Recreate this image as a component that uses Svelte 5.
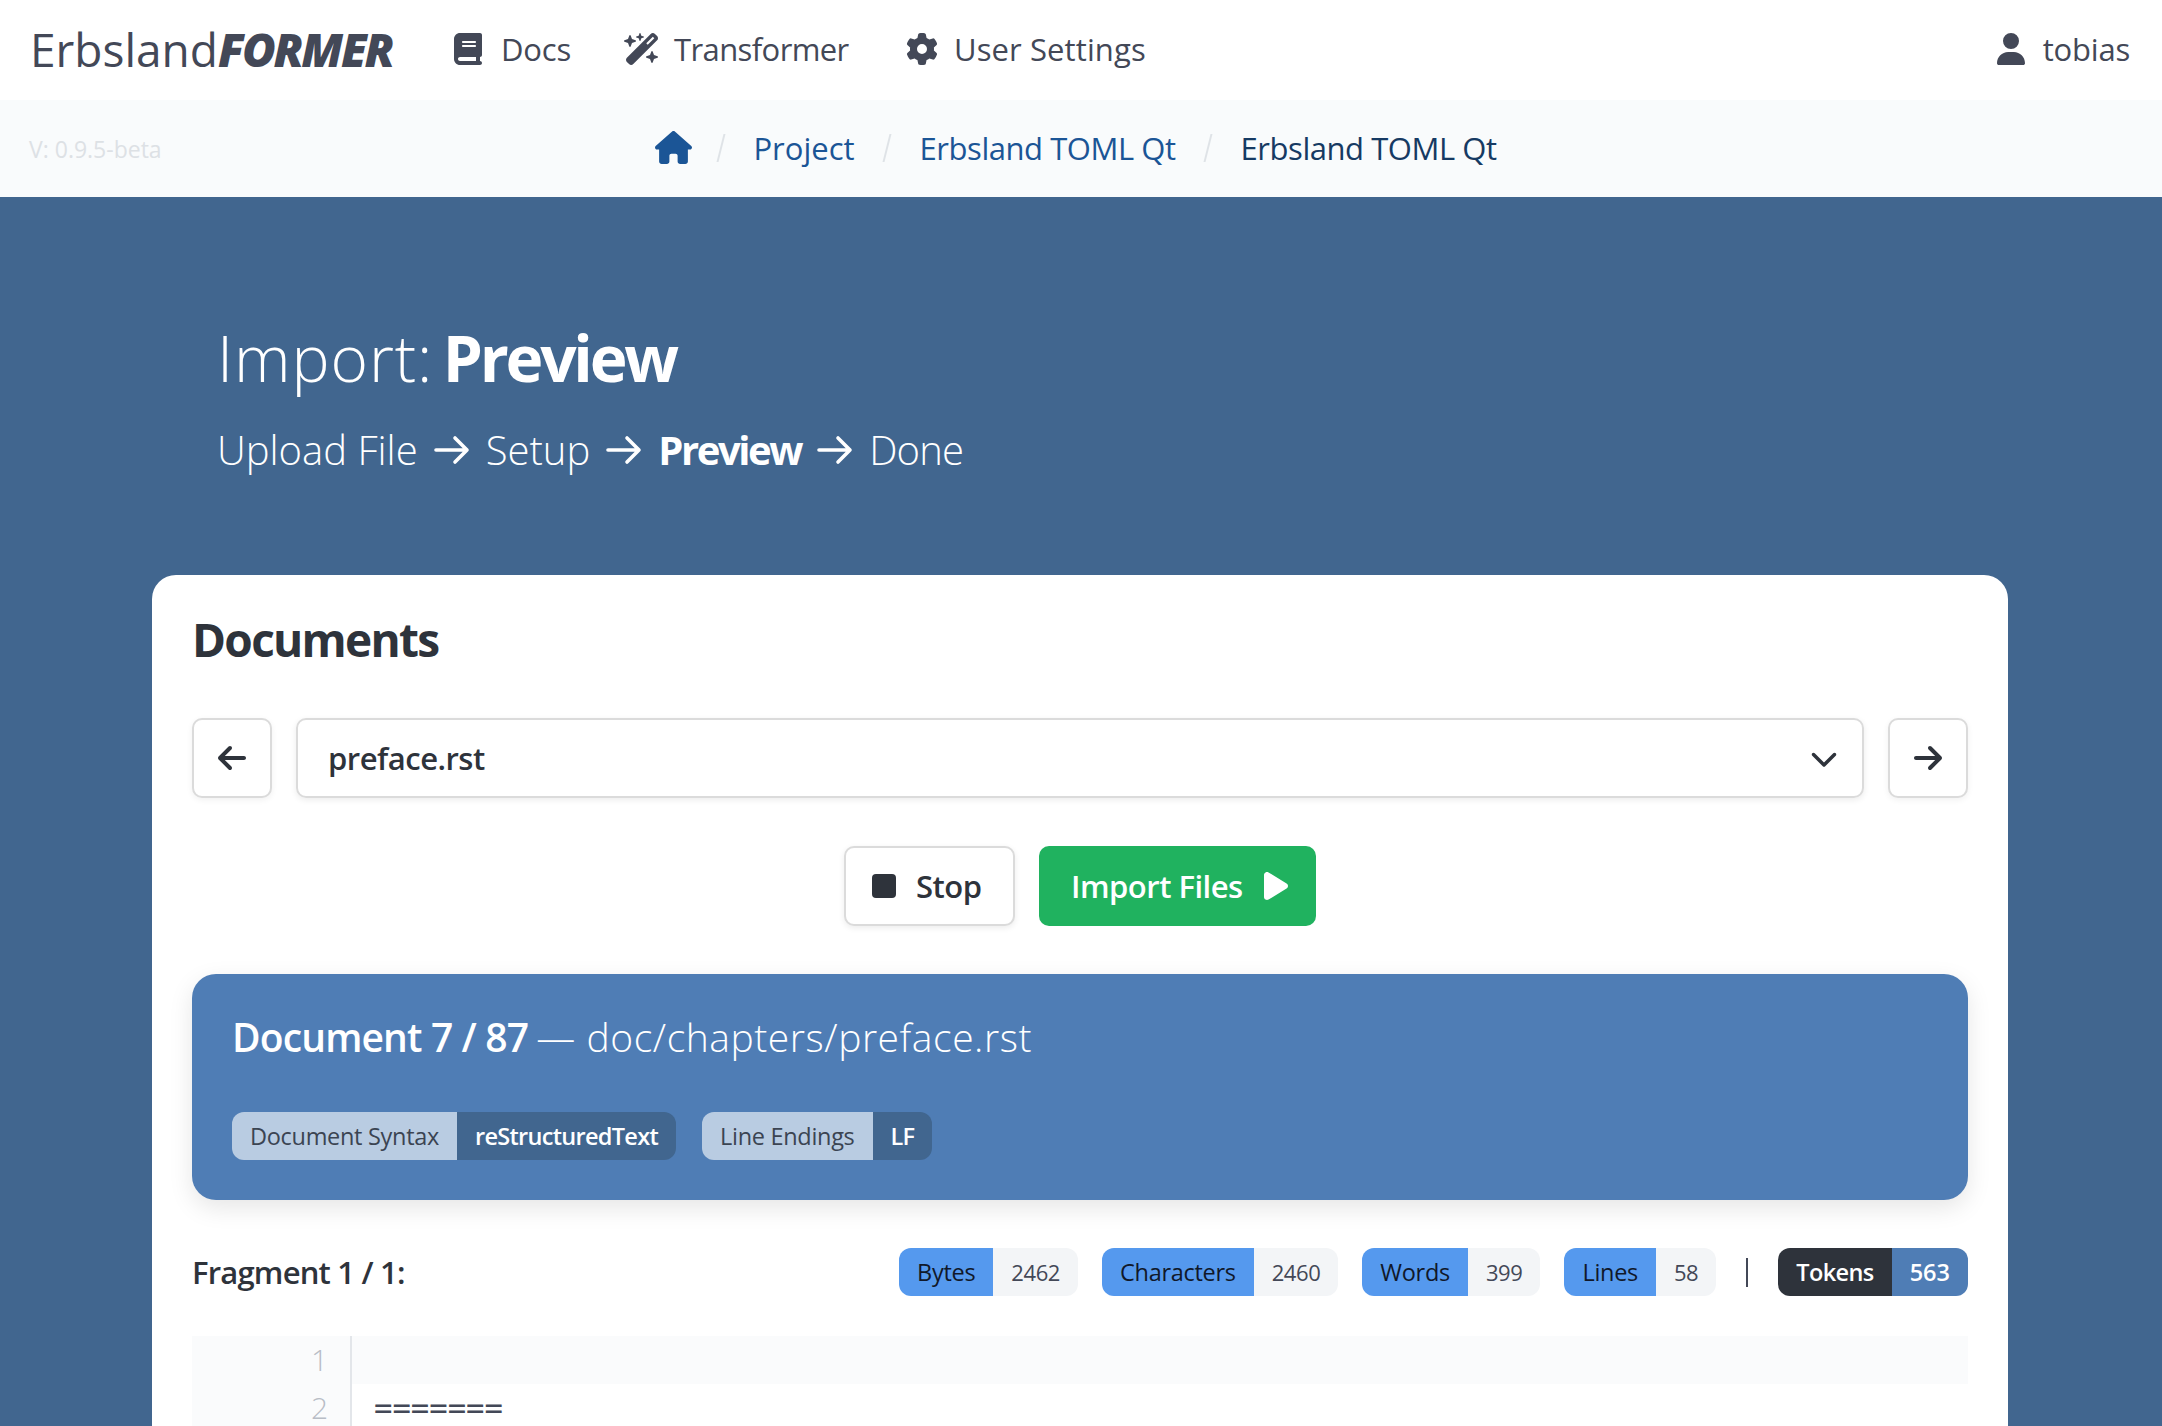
<script>
  const I = {
    book: ['0 0 448 512', 'M96 0C43 0 0 43 0 96V416c0 53 43 96 96 96H384h32c17.7 0 32-14.3 32-32s-14.3-32-32-32V384c17.7 0 32-14.3 32-32V32c0-17.7-14.3-32-32-32H384 96zm0 384H352v64H96c-17.7 0-32-14.3-32-32s14.3-32 32-32zm32-240c0-8.8 7.2-16 16-16H336c8.8 0 16 7.2 16 16s-7.2 16-16 16H144c-8.8 0-16-7.2-16-16zm16 48H336c8.8 0 16 7.2 16 16s-7.2 16-16 16H144c-8.8 0-16-7.2-16-16s7.2-16 16-16z'],
    wand: ['0 0 576 512', 'M234.7 42.7L197 56.8c-3 1.1-5 4-5 7.2s2 6.1 5 7.2l37.7 14.1L248.8 123c1.1 3 4 5 7.2 5s6.1-2 7.2-5l14.1-37.7L315 71.2c3-1.1 5-4 5-7.2s-2-6.1-5-7.2L277.3 42.7 263.2 5c-1.1-3-4-5-7.2-5s-6.1 2-7.2 5L234.7 42.7zM46.1 395.4c-18.7 18.7-18.7 49.1 0 67.9l34.6 34.6c18.7 18.7 49.1 18.7 67.9 0L529.9 116.5c18.7-18.7 18.7-49.1 0-67.9L495.3 14.1c-18.7-18.7-49.1-18.7-67.9 0L46.1 395.4zM484.6 82.6l-105 105-23.3-23.3 105-105 23.3 23.3zM7.5 117.2C3 118.9 0 123.2 0 128s3 9.1 7.5 10.8L64 160l21.2 56.5c1.7 4.5 6 7.5 10.8 7.5s9.1-3 10.8-7.5L128 160l56.5-21.2c4.5-1.7 7.5-6 7.5-10.8s-3-9.1-7.5-10.8L128 96 106.8 39.5C105.1 35 100.8 32 96 32s-9.1 3-10.8 7.5L64 96 7.5 117.2zm352 256c-4.5 1.7-7.5 6-7.5 10.8s3 9.1 7.5 10.8L416 416l21.2 56.5c1.7 4.5 6 7.5 10.8 7.5s9.1-3 10.8-7.5L480 416l56.5-21.2c4.5-1.7 7.5-6 7.5-10.8s-3-9.1-7.5-10.8L480 352l-21.2-56.5c-1.7-4.5-6-7.5-10.8-7.5s-9.1 3-10.8 7.5L416 352l-56.5 21.2z'],
    gear: ['0 0 512 512', 'M495.9 166.6c3.2 8.7 .5 18.4-6.4 24.6l-43.3 39.4c1.1 8.3 1.7 16.8 1.7 25.4s-.6 17.1-1.7 25.4l43.3 39.4c6.9 6.2 9.6 15.9 6.4 24.6c-4.4 11.9-9.7 23.3-15.8 34.3l-4.7 8.1c-6.6 11-14 21.4-22.1 31.2c-5.9 7.2-15.7 9.6-24.5 6.8l-55.7-17.7c-13.4 10.3-28.2 18.9-44 25.4l-12.5 57.1c-2 9.1-9 16.3-18.2 17.8c-13.8 2.3-28 3.5-42.5 3.5s-28.7-1.2-42.5-3.5c-9.2-1.5-16.2-8.7-18.2-17.8l-12.5-57.1c-15.8-6.5-30.6-15.1-44-25.4L83.1 425.9c-8.8 2.8-18.6 .3-24.5-6.8c-8.1-9.8-15.5-20.2-22.1-31.2l-4.7-8.1c-6.1-11-11.4-22.4-15.8-34.3c-3.2-8.7-.5-18.4 6.4-24.6l43.3-39.4C64.6 273.1 64 264.6 64 256s.6-17.1 1.7-25.4L22.4 191.2c-6.9-6.2-9.6-15.9-6.4-24.6c4.4-11.9 9.7-23.3 15.8-34.3l4.7-8.1c6.6-11 14-21.4 22.1-31.2c5.9-7.2 15.7-9.6 24.5-6.8l55.7 17.7c13.4-10.3 28.2-18.9 44-25.4l12.5-57.1c2-9.1 9-16.3 18.2-17.8C227.3 1.2 241.5 0 256 0s28.7 1.2 42.5 3.5c9.2 1.5 16.2 8.7 18.2 17.8l12.5 57.1c15.8 6.5 30.6 15.1 44 25.4l55.7-17.7c8.8-2.8 18.6-.3 24.5 6.8c8.1 9.8 15.5 20.2 22.1 31.2l4.7 8.1c6.1 11 11.4 22.4 15.8 34.3zM256 336a80 80 0 1 0 0-160 80 80 0 1 0 0 160z'],
    user: ['0 0 448 512', 'M224 256A128 128 0 1 0 224 0a128 128 0 1 0 0 256zm-45.7 48C79.8 304 0 383.8 0 482.3C0 498.7 13.3 512 29.7 512H418.3c16.4 0 29.7-13.3 29.7-29.7C448 383.8 368.2 304 269.7 304H178.3z'],
    house: ['0 0 576 512', 'M575.8 255.5c0 18-15 32.1-32 32.1h-32l.7 160.2c0 2.7-.2 5.4-.5 8.1V472c0 22.1-17.9 40-40 40H456c-1.1 0-2.2 0-3.3-.1c-1.4 .1-2.8 .1-4.2 .1H416 392c-22.1 0-40-17.9-40-40V448 384c0-17.7-14.3-32-32-32H256c-17.7 0-32 14.3-32 32v64 24c0 22.1-17.9 40-40 40H160 128.1c-1.5 0-3-.1-4.5-.2c-1.2 .1-2.4 .2-3.6 .2H104c-22.1 0-40-17.9-40-40V360c0-.9 0-1.9 .1-2.8V287.6H32c-18 0-32-14-32-32.1c0-9 3-17 10-24L266.4 8c7-7 15-8 22-8s15 2 21 7L564.8 231.5c8 7 12 15 11 24z'],
    right: ['0 0 448 512', 'M438.6 278.6c12.5-12.5 12.5-32.8 0-45.3l-160-160c-12.5-12.5-32.8-12.5-45.3 0s-12.5 32.8 0 45.3L338.8 224 32 224c-17.7 0-32 14.3-32 32s14.3 32 32 32l306.7 0L233.4 393.4c-12.5 12.5-12.5 32.8 0 45.3s32.8 12.5 45.3 0l160-160z'],
    left: ['0 0 448 512', 'M9.4 233.4c-12.5 12.5-12.5 32.8 0 45.3l160 160c12.5 12.5 32.8 12.5 45.3 0s12.5-32.8 0-45.3L109.2 288 416 288c17.7 0 32-14.3 32-32s-14.3-32-32-32l-306.7 0L214.6 118.6c12.5-12.5 12.5-32.8 0-45.3s-32.8-12.5-45.3 0l-160 160z'],
    chev: ['0 0 512 512', 'M233.4 406.6c12.5 12.5 32.8 12.5 45.3 0l192-192c12.5-12.5 12.5-32.8 0-45.3s-32.8-12.5-45.3 0L256 338.7 86.6 169.4c-12.5-12.5-32.8-12.5-45.3 0s-12.5 32.8 0 45.3l192 192z'],
    play: ['0 0 384 512', 'M73 39c-14.8-9.1-33.4-9.4-48.5-.9S0 62.6 0 80V432c0 17.4 9.4 33.4 24.5 41.9s33.7 8.1 48.5-.9L361 297c14.3-8.7 23-24.2 23-41s-8.7-32.2-23-41L73 39z']
  };
  const stats = [['Bytes', '2462'], ['Characters', '2460'], ['Words', '399'], ['Lines', '58']];
</script>

{#snippet icon(name, cls)}
  <svg class={cls} viewBox={I[name][0]} aria-hidden="true"><path d={I[name][1]} fill="currentColor" /></svg>
{/snippet}

{#snippet flow()}
  <svg class="flow-arrow" viewBox="0 0 36 32" aria-hidden="true"><path d="M2 16H33M21 4L33 16L21 28" fill="none" stroke="currentColor" stroke-width="3.6" stroke-linecap="round" stroke-linejoin="round" /></svg>
{/snippet}

<div class="page">
  <nav class="nav">
    <div class="logo">Erbsland<b>FORMER</b></div>
    <a class="item docs">{@render icon('book', 'i-book')}<span>Docs</span></a>
    <a class="item trans">{@render icon('wand', 'i-wand')}<span>Transformer</span></a>
    <a class="item settings">{@render icon('gear', 'i-gear')}<span>User Settings</span></a>
    <a class="item user">{@render icon('user', 'i-user')}<span>tobias</span></a>
  </nav>

  <div class="crumbs">
    <span class="version">V: 0.9.5-beta</span>
    <div class="trail">
      <a class="link home">{@render icon('house', 'i-house')}</a>
      <i class="sep"></i>
      <a class="link">Project</a>
      <i class="sep"></i>
      <a class="link tight">Erbsland TOML Qt</a>
      <i class="sep"></i>
      <span class="current tight">Erbsland TOML Qt</span>
    </div>
  </div>

  <main class="hero">
    <header class="head">
      <h1>Import: <b>Preview</b></h1>
      <p class="steps">
        <span>Upload File</span>{@render flow()}<span>Setup</span>{@render flow()}<b>Preview</b>{@render flow()}<span class="done">Done</span>
      </p>
    </header>

    <section class="card">
      <h2>Documents</h2>

      <div class="pick">
        <button class="square">{@render icon('left', 'i-arrow')}</button>
        <div class="select"><span>preface.rst</span>{@render icon('chev', 'i-chev')}</div>
        <button class="square">{@render icon('right', 'i-arrow')}</button>
      </div>

      <div class="actions">
        <button class="btn stop"><i class="stop-box"></i><span>Stop</span></button>
        <button class="btn go"><span>Import Files</span>{@render icon('play', 'i-play')}</button>
      </div>

      <div class="doc">
        <h3><b>Document 7 / 87</b> <span>— doc/chapters/preface.rst</span></h3>
        <div class="doc-tags">
          <span class="pair big"><span class="k">Document Syntax</span><span class="v">reStructuredText</span></span>
          <span class="pair big"><span class="k">Line Endings</span><span class="v">LF</span></span>
        </div>
      </div>

      <div class="frag">
        <strong>Fragment 1 / 1:</strong>
        <div class="stats">
          {#each stats as s}
            <span class="pair stat"><span class="k">{s[0]}</span><span class="v">{s[1]}</span></span>
          {/each}
          <i class="bar"></i>
          <span class="pair tok"><span class="k">Tokens</span><span class="v">563</span></span>
        </div>
      </div>

      <div class="code">
        <div class="row active"><span class="no">1</span><span class="src"></span></div>
        <div class="row"><span class="no">2</span><span class="src">=======</span></div>
      </div>
    </section>
  </main>
</div>

<style>
  :global(html), :global(body) { margin: 0; height: 100%; overflow: hidden; background: #41668f; }
  .page { height: 1426px; overflow: hidden; font-family: "Open Sans", "Noto Sans", sans-serif; color: #2e333b; }
  a { color: inherit; text-decoration: none; }
  svg { display: block; flex: none; }

  .nav { height: 100px; background: #fff; display: flex; align-items: center; padding: 0 32px 3px 30px; color: #434857; font-size: 31px; box-sizing: border-box; }
  .logo { font-size: 46px; font-weight: 500; width: 424px; flex: none; white-space: nowrap; }
  .logo b { font-style: italic; font-weight: 800; letter-spacing: -2.2px; }
  .item { display: flex; align-items: center; }
  .item span { letter-spacing: -0.2px; }
  .trans span { letter-spacing: -0.6px; }
  .settings span { letter-spacing: 0.1px; }
  .docs { width: 170px; flex: none; }
  .trans { width: 282px; flex: none; }
  .user { margin-left: auto; }
  .i-book { width: 28px; height: 32px; margin-right: 19px; }
  .i-wand { width: 36px; height: 32px; margin-right: 14px; }
  .i-gear { width: 32px; height: 32px; margin-right: 16px; }
  .i-user { width: 28px; height: 32px; margin-right: 18px; }

  .crumbs { height: 97px; background: #f9fbfc; position: relative; display: flex; align-items: center; justify-content: center; padding-bottom: 2px; box-sizing: border-box; }
  .version { position: absolute; left: 29px; top: 33px; font-size: 23px; color: #dde1e5; }
  .trail { display: flex; align-items: center; font-size: 31px; color: #1b5596; margin-right: 10px; }
  .tight { letter-spacing: -0.45px; }
  .home { margin-right: -4px; }
  .i-house { width: 37px; height: 33px; }
  .sep { width: 2px; height: 28px; background: #dfe3e7; transform: skewX(-14deg); margin: 0 31.5px; }
  .current { color: #163a63; }

  .hero { height: 1229px; background: #41668f; padding: 0 154px 0 152px; box-sizing: border-box; }
  .head { padding: 116px 0 0 65px; color: #fff; height: 378px; box-sizing: border-box; }
  h1 { margin: 0; font-size: 64px; line-height: 90px; font-weight: 300; letter-spacing: 0.9px; }
  h1 b { font-weight: 700; letter-spacing: -3.2px; margin-left: -8px; }
  .steps { margin: 0; padding-top: 2px; display: flex; align-items: center; font-size: 40px; line-height: 90px; font-weight: 300; }
  .steps b { font-weight: 700; letter-spacing: -2.4px; }
  .done { letter-spacing: -0.8px; }
  .flow-arrow { width: 36px; height: 32px; margin: 0 16px; }

  .card { background: #fff; border-radius: 24px; padding: 33px 40px 40px; height: 900px; box-sizing: border-box; }
  h2 { margin: 0 0 48px; font-size: 46px; line-height: 62px; font-weight: 700; letter-spacing: -1.7px; color: #2e333b; }
  .pick { display: flex; gap: 24px; height: 80px; }
  .square { width: 80px; flex: none; padding: 0; display: flex; align-items: center; justify-content: center; background: #fff; border: 2px solid #dbdbdb; border-radius: 10px; color: #2e333b; box-shadow: 0 2px 6px rgba(10,10,10,.06); }
  .i-arrow { width: 28px; height: 32px; }
  .select { flex: 1; display: flex; align-items: center; justify-content: space-between; border: 2px solid #dbdbdb; border-radius: 10px; padding: 0 24px 0 30px; font-size: 31px; font-weight: 600; letter-spacing: -0.5px; box-shadow: 0 2px 6px rgba(10,10,10,.08); }
  .i-chev { width: 28px; height: 28px; color: #2e333b; }
  .actions { display: flex; justify-content: center; gap: 24px; margin-top: 48px; height: 80px; }
  .btn { display: flex; align-items: center; font-family: inherit; font-size: 31px; font-weight: 600; border-radius: 10px; box-sizing: border-box; padding: 0; letter-spacing: -0.5px; }
  .stop { width: 171px; background: #fff; border: 2px solid #dbdbdb; color: #2e333b; padding-left: 26px; box-shadow: 0 2px 6px rgba(10,10,10,.08); }
  .stop-box { width: 24px; height: 24px; border-radius: 4px; background: #2e333b; margin-right: 20px; }
  .go { width: 277px; background: #20b25f; border: 0; color: #fff; padding-left: 32px; }
  .i-play { width: 26px; height: 32px; margin-left: 20px; }

  .doc { margin-top: 48px; background: #4f7db5; border-radius: 24px; height: 226px; box-sizing: border-box; padding: 37px 40px 40px; color: #fff; box-shadow: 0 8px 24px rgba(10,10,10,.1); }
  h3 { margin: 0; font-size: 39px; line-height: 52px; font-weight: 300; white-space: nowrap; }
  h3 b { font-weight: 600; letter-spacing: -0.85px; }
  h3 span { letter-spacing: 0.55px; margin-left: -2px; }
  .doc-tags { display: flex; gap: 26px; margin-top: 49px; }
  .pair { display: inline-flex; height: 48px; border-radius: 12px; overflow: hidden; font-size: 23.5px; align-items: stretch; }
  .pair span { display: flex; align-items: center; }
  .pair .k { letter-spacing: -0.3px; }
  .big .k { background: #b9cce2; color: #3b4452; padding: 0 18px; }
  .big .v { background: #41668f; color: #fff; padding: 0 18px; font-weight: 600; letter-spacing: -0.7px; }

  .frag { display: flex; align-items: center; justify-content: space-between; margin-top: 48px; height: 48px; }
  .frag strong { font-size: 31px; font-weight: 600; letter-spacing: -0.8px; }
  .stats { display: flex; align-items: center; gap: 24px; }
  .stat .k { background: #5599ee; color: #10182a; padding: 0 18px; }
  .stat .v { background: #f3f5f7; color: #434857; padding: 0 18px; font-size: 22px; letter-spacing: -0.4px; }
  .bar { width: 2px; height: 29px; background: #434857; margin: 0 6px; }
  .tok { font-weight: 600; }
  .tok .k { background: #2e333b; color: #fff; padding: 0 18px; letter-spacing: -0.6px; }
  .tok .v { background: #4f7db5; color: #fff; padding: 0 18px; }

  .code { margin-top: 40px; font-family: "DejaVu Sans Mono", monospace; font-size: 30.6px; }
  .row { display: flex; height: 48px; line-height: 48px; }
  .no { width: 160px; flex: none; box-sizing: border-box; background: #fafbfc; border-right: 2px solid #e3e6ea; text-align: right; padding-right: 22px; color: #b8bdc6; font-family: "Open Sans", sans-serif; font-size: 30px; font-weight: 300; }
  .src { flex: 1; padding-left: 22px; color: #434857; }
  .active .src { background: #fafbfc; }
</style>
